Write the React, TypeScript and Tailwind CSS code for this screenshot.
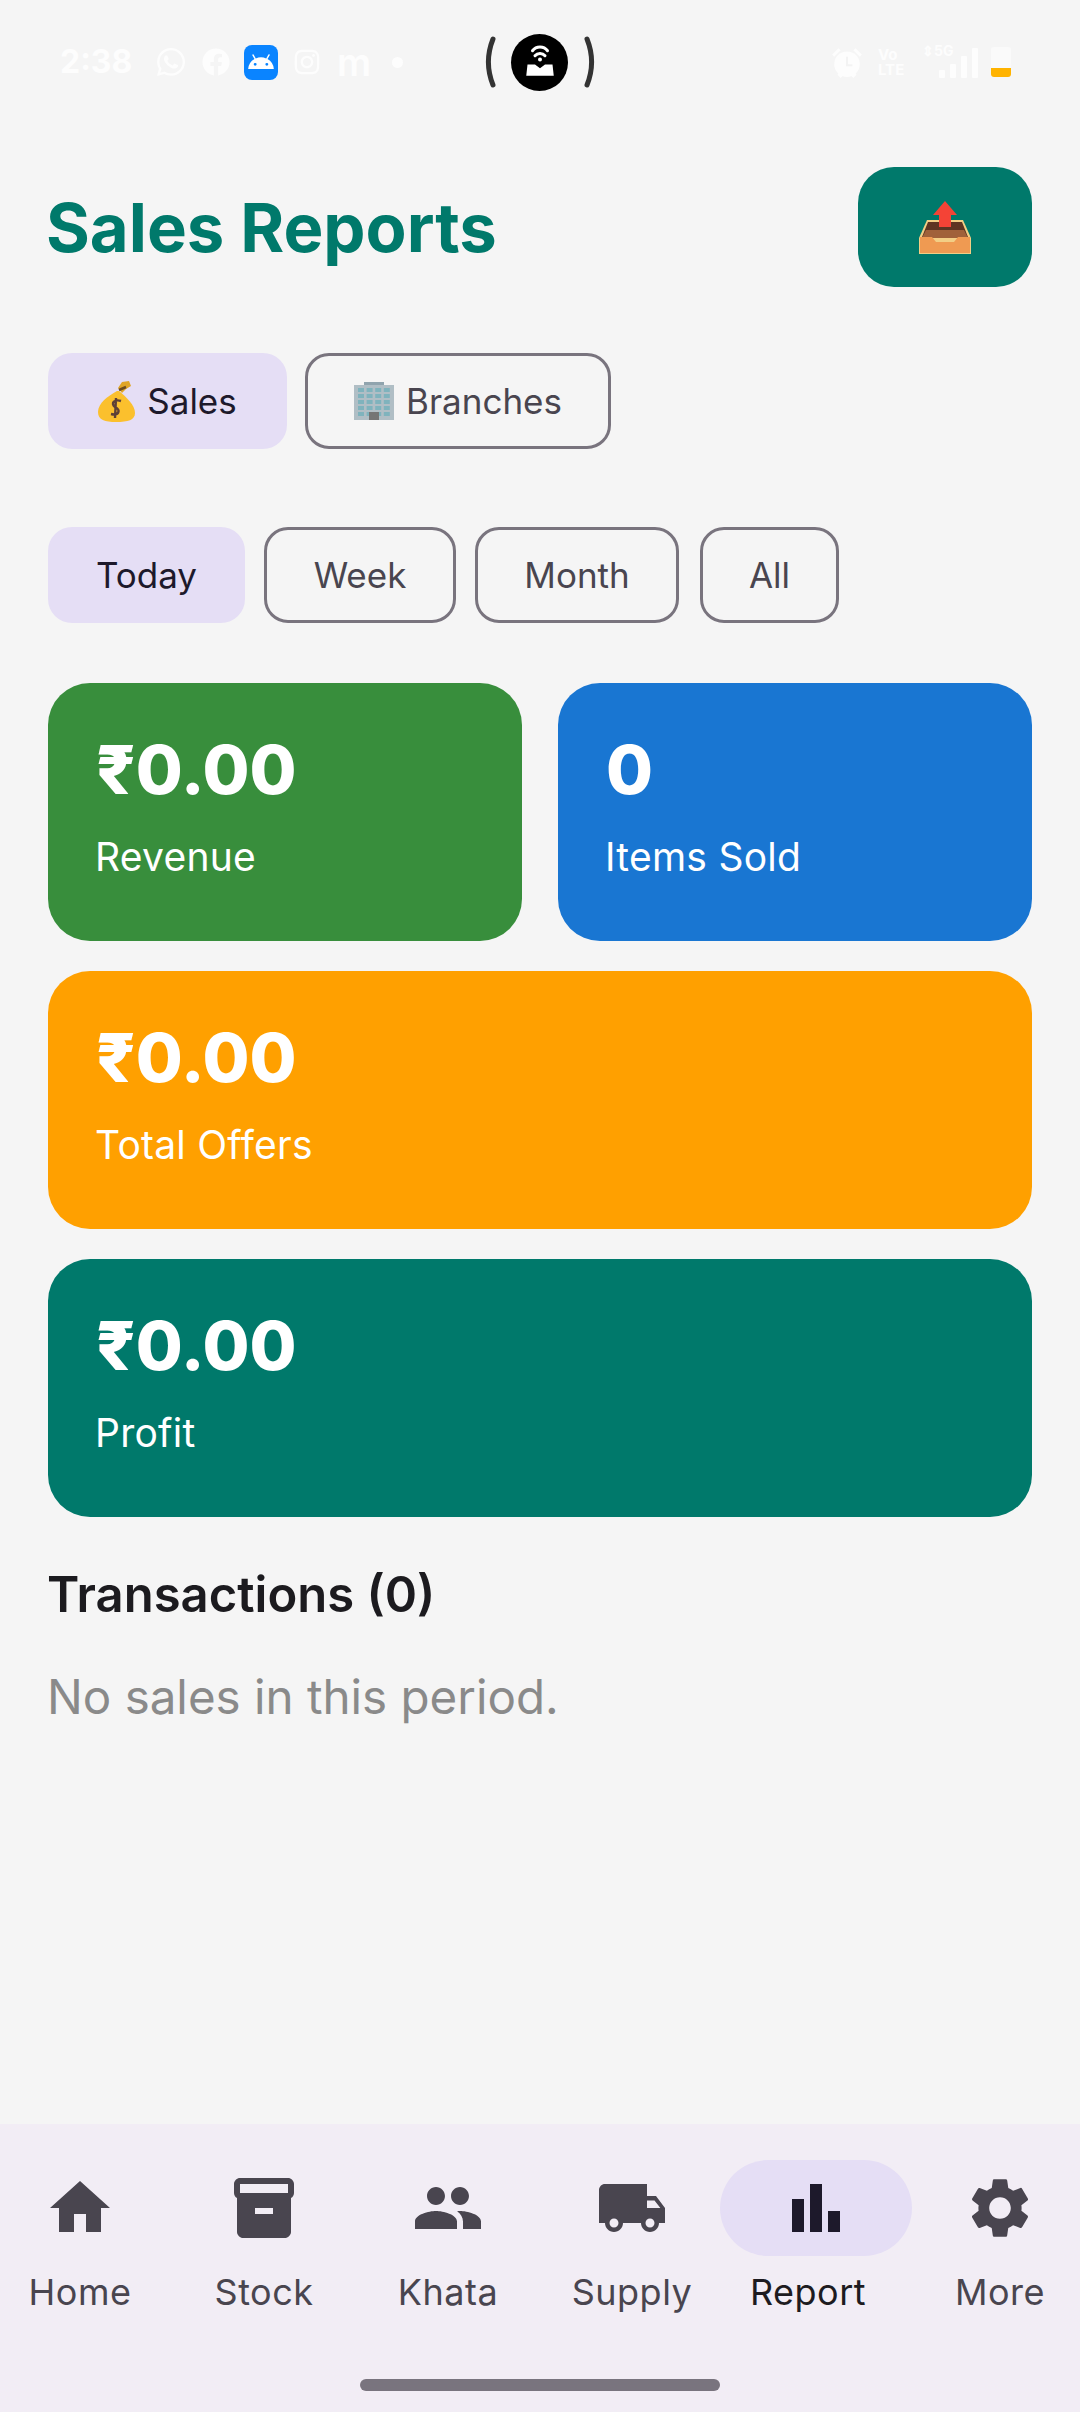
import { FaFacebook, FaInstagram, FaWhatsapp } from "react-icons/fa";
import { MdAndroid, MdHome, MdInventory2, MdLocalShipping, MdPeople, MdSettings } from "react-icons/md";

const BarChartIcon = ({ className }: { className?: string }) => (
  <svg viewBox="0 0 24 24" fill="currentColor" className={className}>
    <path d="M4 9h4v11H4zM16 13h4v7h-4zM10 4h4v16h-4z" />
  </svg>
);

const AlarmIcon = () => (
  <svg viewBox="0 0 32 32" fill="currentColor" className="h-[34px] w-[34px] shrink-0">
    <circle cx="16" cy="18" r="12" />
    <path d="M2 9 L8 3 L10 5 L4 11 Z M30 9 L24 3 L22 5 L28 11 Z M7 28 L10 31 L12 29 L9 26 Z M25 28 L22 31 L20 29 L23 26 Z" />
    <path d="M16 11 V19 H21" stroke="#F3F3F3" strokeWidth="2" fill="none" />
  </svg>
);

const MoneyBag = () => (
  <svg viewBox="0 0 37 42" className="h-[42px] w-[37px] shrink-0">
    <path d="M20 8 L24 2 L31 1 L33 6 L28 9 L24 13 Z" fill="#E0A526" />
    <path d="M21 10 L28 7" stroke="#6D4C1F" strokeWidth="2.5" />
    <path d="M21 11 C28 17 37 25 37 33 C37 40 30 42 18 42 C7 42 0 40 0 32 C0 23 10 16 19 11 Z" fill="#FBC02D" />
    <path d="M23 21 C17 19 12 23 17 27 C23 30 21 36 13 34 M18 18 L17 38" stroke="#5D4037" strokeWidth="2.4" fill="none" />
  </svg>
);

const Building = () => {
  const windows = [0, 1, 2, 3, 4].flatMap((r) => [0, 1, 2, 3].map((c) => ({ r, c })));
  return (
    <svg viewBox="0 0 40 38" className="h-[38px] w-[40px] shrink-0">
      <rect x="10" y="0" width="20" height="4" fill="#90A4AE" />
      <rect x="0" y="3" width="40" height="35" fill="#B0BEC5" />
      {windows.map(({ r, c }) => (
        <rect key={`${r}-${c}`} x={4 + c * 8.6} y={6 + r * 6} width="6" height="4" fill="#7FB3BD" />
      ))}
      <rect x="15" y="30" width="10" height="8" fill="#757575" />
    </svg>
  );
};

const OutboxTray = () => (
  <svg viewBox="0 0 52 53" className="h-[53px] w-[52px]">
    <path d="M8 19 H44 L52 37 V53 H0 V37 Z" fill="#F2CE85" />
    <path d="M9 21 H43 L49 36 H3 Z" fill="#5D3422" />
    <path d="M7 29 H45 L49 37 H3 Z" fill="#A0613A" />
    <path d="M1 36 H13 L17 41 H35 L39 36 H51 V52 H1 Z" fill="#EF9A52" />
    <path d="M26 0 L38 14 H32 V26 H20 V14 H14 Z" fill="#F44336" />
  </svg>
);

const StatusBar = () => (
  <div className="flex h-[100px] shrink-0 items-center pt-[24px] text-[#FDFDFD]">
    <span className="ml-[60px] w-[70px] shrink-0 text-[32px] leading-none font-bold">2:38</span>
    <FaWhatsapp className="ml-[25px] h-[32px] w-[32px] shrink-0" />
    <FaFacebook className="ml-[15px] h-[28px] w-[28px] shrink-0" />
    <div className="ml-[14px] flex h-[35px] w-[34px] shrink-0 items-center justify-center rounded-[8px] bg-[#0A84FF] text-white">
      <MdAndroid className="h-[28px] w-[28px]" />
    </div>
    <FaInstagram className="ml-[15px] h-[28px] w-[28px] shrink-0" />
    <span className="ml-[16px] w-[31px] shrink-0 text-[38px] leading-none font-semibold">m</span>
    <span className="ml-[24px] h-[11px] w-[11px] shrink-0 rounded-full bg-[#FDFDFD]" />

    <div className="ml-[81px] flex shrink-0 items-center">
      <svg viewBox="0 0 12 52" className="h-[52px] w-[12px]" fill="none" stroke="#333333" strokeWidth="5" strokeLinecap="round">
        <path d="M9 3 C3 18 3 34 9 49" />
      </svg>
      <div className="ml-[15px] flex h-[57px] w-[57px] items-center justify-center rounded-full bg-black">
        <svg viewBox="0 0 32 32" className="h-[40px] w-[40px]" fill="none" stroke="white" strokeLinecap="round">
          <path d="M10 7 C13 3 19 3 22 7" strokeWidth="2.4" />
          <path d="M12 11 C14 8.5 18 8.5 20 11" strokeWidth="2.4" />
          <circle cx="16" cy="14" r="1.6" fill="white" stroke="none" />
          <path d="M6 18 H12 L16 21 L20 18 H26 L27 27 H5 Z" fill="white" stroke="none" />
        </svg>
      </div>
      <svg viewBox="0 0 12 52" className="ml-[16px] h-[52px] w-[12px]" fill="none" stroke="#333333" strokeWidth="5" strokeLinecap="round">
        <path d="M3 3 C9 18 9 34 3 49" />
      </svg>
    </div>

    <div className="ml-[234px]">
      <AlarmIcon />
    </div>
    <span className="ml-[14px] w-[28px] shrink-0 text-[15px] leading-[15px] font-bold">
      Vo
      <br />
      LTE
    </span>
    <div className="relative ml-[16px] h-[32px] w-[56px] shrink-0">
      <span className="absolute top-[-2px] left-0 text-[14px] leading-none font-bold">⇕5G</span>
      <div className="absolute right-0 bottom-0 flex items-end gap-[5px]">
        <span className="h-[8px] w-[6px] rounded-[1px] bg-[#FDFDFD]" />
        <span className="h-[14px] w-[6px] rounded-[1px] bg-[#FDFDFD]" />
        <span className="h-[22px] w-[6px] rounded-[1px] bg-[#FDFDFD]" />
        <span className="h-[30px] w-[6px] rounded-[1px] bg-[#FDFDFD]" />
      </div>
    </div>
    <div className="ml-[13px] flex h-[30px] w-[20px] shrink-0 flex-col justify-end rounded-[3px] bg-[#FAFAFA]">
      <span className="h-[9px] rounded-b-[3px] bg-[#FFB300]" />
    </div>
  </div>
);

const Chip = ({ label, active, className, icon }: { label: string; active?: boolean; className: string; icon?: React.ReactNode }) => (
  <div
    className={`flex h-[96px] items-center justify-center rounded-[24px] text-[35px] ${className} ${
      active ? "bg-[#E5DEF5] text-[#1D192B]" : "border-[3px] border-[#79747E] text-[#49454F]"
    }`}
  >
    {icon}
    {label}
  </div>
);

const StatCard = ({ value, label, color, className }: { value: string; label: string; color: string; className?: string }) => (
  <div className={`flex h-[258px] flex-col rounded-[42px] px-[47px] pt-[46px] text-white ${color} ${className ?? ""}`}>
    <div className="pl-[1px] text-[68px] leading-[80px] font-extrabold">{value}</div>
    <div className="mt-[23px] text-[39px] leading-[50px] tracking-[0.25px]">{label}</div>
  </div>
);

const navItems = [
  { label: "Home", Icon: MdHome },
  { label: "Stock", Icon: MdInventory2 },
  { label: "Khata", Icon: MdPeople },
  { label: "Supply", Icon: MdLocalShipping },
  { label: "Report", Icon: BarChartIcon, active: true },
  { label: "More", Icon: MdSettings },
];

export default function App() {
  return (
    <div className="flex h-[2412px] w-[1080px] flex-col overflow-hidden bg-[#F5F5F5] font-['Inter',sans-serif]">
      <StatusBar />

      <div className="mt-[67px] flex h-[120px] shrink-0 items-center justify-between pr-[48px] pl-[46px]">
        <h1 className="text-[67px] leading-none font-bold text-[#00796B]">Sales Reports</h1>
        <div className="flex h-[120px] w-[174px] items-center justify-center rounded-[36px] bg-[#00796B]">
          <OutboxTray />
        </div>
      </div>

      <div className="mt-[66px] flex gap-[18px] px-[48px]">
        <Chip label="Sales" active className="w-[239px] gap-[12px]" icon={<MoneyBag />} />
        <Chip label="Branches" className="w-[306px] gap-[12px]" icon={<Building />} />
      </div>

      <div className="mt-[78px] flex gap-[19px] px-[48px]">
        <Chip label="Today" active className="w-[197px]" />
        <Chip label="Week" className="w-[192px]" />
        <Chip label="Month" className="w-[204px]" />
        <Chip label="All" className="ml-[2px] w-[139px]" />
      </div>

      <div className="mt-[60px] flex flex-col gap-[30px] px-[48px]">
        <div className="flex gap-[36px]">
          <StatCard value="₹0.00" label="Revenue" color="bg-[#388E3C]" className="flex-1" />
          <StatCard value="0" label="Items Sold" color="bg-[#1976D2]" className="flex-1" />
        </div>
        <StatCard value="₹0.00" label="Total Offers" color="bg-[#FFA000]" />
        <StatCard value="₹0.00" label="Profit" color="bg-[#00796B]" />
      </div>

      <h2 className="mt-[48px] pl-[47px] text-[49px] leading-[60px] font-semibold text-[#1C1B1F]">Transactions (0)</h2>
      <p className="mt-[42px] pl-[47px] text-[47.5px] leading-[60px] text-[#8A8A8A]">No sales in this period.</p>

      <nav className="mt-auto flex h-[288px] shrink-0 flex-col items-center overflow-hidden bg-[#F2EDF5] pt-[36px]">
        <div className="flex w-[1104px] shrink-0">
          {navItems.map(({ label, Icon, active }) => (
            <div key={label} className="flex w-[184px] flex-col items-center">
              <div className={`flex h-[96px] w-[192px] shrink-0 items-center justify-center rounded-[48px] ${active ? "bg-[#E5DEF5] text-[#1D192B]" : "text-[#49454F]"}`}>
                <Icon className="h-[72px] w-[72px]" />
              </div>
              <span className={`mt-[12px] text-[36px] leading-[48px] tracking-[0.5px] ${active ? "pr-[16px] text-[#1D1B20]" : "text-[#49454F]"}`}>{label}</span>
            </div>
          ))}
        </div>
        <div className="mt-[63px] h-[12px] w-[360px] rounded-full bg-[#79747E]" />
      </nav>
    </div>
  );
}
